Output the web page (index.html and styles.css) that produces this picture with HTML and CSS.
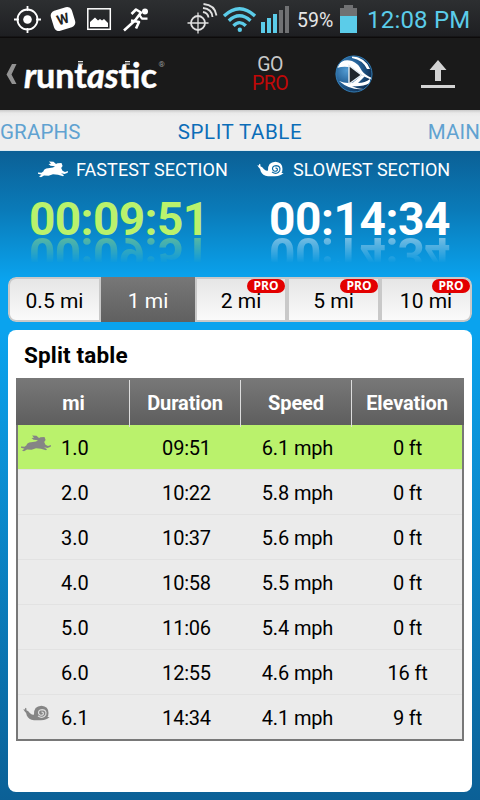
FILE: index.html
```html
<!DOCTYPE html>
<html lang="en">
<head>
<meta charset="utf-8">
<title>Split table</title>
<link rel="stylesheet" href="styles.css">
</head>
<body>
<svg class="defs" width="0" height="0">
  <defs>
    <symbol id="rabbit" viewBox="0 0 30 17">
      <path d="M0 11.500 L3.500 11.800 L5.500 10.200 Q6 7.500 10 7.200 L15 6.500 L17 5.300 L12.500 4.800 L10.500 3 L13 2.800 L11 .6 L15.500 .8 L18 3 L19.500 2.200 L23.500 2 L24.600 5 L23.200 7 L24.500 9.800 L27 11 L30 10 L29.700 11.800 L26.500 13 L23 12.200 L26 14.300 L25 15.300 L20 13.800 L15 13.200 L10.500 14.800 L6 14.600 L3 16.200 L1 15.500 L3.500 13.700 L0 12.800 Z"/>
    </symbol>
    <symbol id="snail" viewBox="0 0 27 16">
      <path d="M.3 4.200 L2 4.500 L2.200 2.800 L3.500 3.500 L3.400 5.300 Q5.500 6 6.800 8 Q9 10.500 11 9.500 Q10.500 1 18.500 .7 Q25.500 1.200 25.500 8 Q25.500 11 24.300 12.100 L26.600 12 Q24 15 18 15.300 L11 15.300 Q5.500 14.500 3.800 10.500 Q3.500 7.500 1.600 6.200 Z"/>
      <path class="shell" d="M15 11 Q20 14.200 22.700 9.700 Q24 5.200 19.200 4.600 Q14.600 5 15.700 8.700 Q17.500 11.400 20.200 9.400 Q21 6.900 18.500 7.100"/>
    </symbol>
  </defs>
</svg>

<header class="status">
  <svg class="tray" width="350" height="37" viewBox="0 0 350 37">
    <g fill="none" stroke="#fff" stroke-width="1.8">
      <circle cx="27.500" cy="19.500" r="10"/>
      <path d="M27.500 6V11M27.500 28V33M14 19.500H19M36 19.500H41"/>
    </g>
    <circle cx="27.500" cy="19.500" r="4.300" fill="#fff"/>
    <g transform="rotate(-17 63 19)">
      <rect x="52" y="8.500" width="22" height="21" rx="5" fill="#fff"/>
      <text class="w-mark" x="63" y="24">W</text>
    </g>
    <rect x="87.800" y="8.800" width="22.500" height="20.500" fill="none" stroke="#fff" stroke-width="1.500"/>
    <path d="M90 27V22L95 17.500L98 20.500L100 19L102 20.500L104 19L108 23V27Z" fill="#fff"/>
    <circle cx="145" cy="11.500" r="3" fill="#fff"/>
    <g fill="none" stroke="#fff" stroke-width="2.600" stroke-linejoin="round">
      <path d="M131.500 14L136 9.500L141 12.500L135 20.500L124 30.500"/>
      <path d="M139 14.500L142 18.700H147.500" stroke-width="2.200"/>
      <path d="M131 20.500L139 22L136 28.500"/>
    </g>
    <g fill="none" stroke="#e0e0e0" stroke-width="1.800">
      <circle cx="198" cy="23" r="7"/>
      <path d="M198 12.500V33.500M187.500 23H208.500" stroke-width="1.300"/>
      <path d="M203 12Q208 13 208.500 17.500M203 8Q212 9 212.500 17M203.500 4Q215 5 216.500 15.500"/>
    </g>
    <g fill="none" stroke="#5bcce9" stroke-width="3.400">
      <path d="M224 16Q239.500 1.500 255 16"/>
      <path d="M228.800 20.800Q239.500 10.800 250.500 20.800"/>
      <path d="M233.500 25.800Q239.500 19.500 245.800 25.800"/>
    </g>
    <circle cx="239.800" cy="29.700" r="2.200" fill="#5bcce9"/>
    <path d="M261 22h4v11h-4zM267 18h4v15h-4zM273 14h4v19h-4z" fill="#5bcce9"/>
    <path d="M279 10h4v23h-4zM285 6h4v27h-4z" fill="#707173"/>
  </svg>
  <span class="percent">59%</span>
  <svg class="battery" width="18" height="37" viewBox="0 0 18 37">
    <path d="M0 8H4V5H13V8H17V16H0Z" fill="#707173"/>
    <path d="M0 16H17V33H0Z" fill="#5bcce9"/>
  </svg>
  <span class="clock">12:08 PM</span>
</header>

<div class="actionbar">
  <svg class="brand" width="170" height="72" viewBox="0 0 170 72">
    <path d="M12 26H16.500L11.500 36.500L16.500 46H12L6.500 36.500Z" fill="#929292"/>
    <g class="logo">
      <text x="24" y="49.500" textLength="133" lengthAdjust="spacingAndGlyphs"><tspan class="slant">r</tspan>unt<tspan class="slant">as</tspan>tic</text>
    </g>
    <path d="M78 23.700h5M78 26.200h5M125 23.700h5M125 26.200h5" stroke="#ddd" stroke-width="1.200"/>
    <text class="reg" x="158.500" y="28.500">®</text>
  </svg>
  <div class="gopro"><span>GO</span><span class="red">PRO</span></div>
  <svg class="globe" width="38" height="38" viewBox="0 0 38 38">
    <defs>
      <radialGradient id="ball" cx=".3" cy=".4" r=".75">
        <stop offset="0" stop-color="#529bd2"/><stop offset=".5" stop-color="#246096"/><stop offset="1" stop-color="#0b2545"/>
      </radialGradient>
      <clipPath id="ballclip"><circle cx="19" cy="19" r="18.300"/></clipPath>
    </defs>
    <circle cx="19" cy="19" r="18.300" fill="url(#ball)"/>
    <g clip-path="url(#ballclip)">
      <path d="M2 11Q8 3 17 6Q23 8 27 16Q30 20 37 23V25Q29 22 23 17Q14 9 2 13Z" fill="#fff"/>
      <path d="M17 1Q31 3 35 14L32 14Q28 5 17 3Z" fill="#fff"/>
      <path d="M4 26Q11 29 18 27.500L27 20L30 21L23 28Q30 28 35 24V28Q27 32 17 31Q22 34 29 34Q16 36 4 26Z" fill="#fff"/>
      <path d="M14 10.500L26.500 20L14 29Z" fill="#20262c" stroke="#e6eef4" stroke-width="1.400"/>
    </g>
    <circle cx="19" cy="19" r="18" fill="none" stroke="#347cb2" stroke-width="1"/>
  </svg>
  <svg class="share" width="34" height="30" viewBox="0 0 34 30">
    <path d="M17 1L25.500 11H20V22H14V11H8.500ZM0 26H34V29H0Z" fill="#d3d3d3"/>
  </svg>
</div>

<nav class="tabs">
  <span>GRAPHS</span>
  <span class="current">SPLIT TABLE</span>
  <span class="last">MAIN</span>
</nav>

<main>
  <section class="summary">
    <div class="stat fast">
      <div class="label"><svg width="30" height="17"><use href="#rabbit"/></svg><span>FASTEST SECTION</span></div>
      <div class="time">00:09:51</div>
      <div class="mirror" aria-hidden="true"><div>00:09:51</div></div>
    </div>
    <div class="stat slow">
      <div class="label"><svg width="27" height="16"><use href="#snail"/></svg><span>SLOWEST SECTION</span></div>
      <div class="time">00:14:34</div>
      <div class="mirror" aria-hidden="true"><div>00:14:34</div></div>
    </div>
  </section>

  <div class="segments">
    <button>0.5 mi</button>
    <button class="on">1 mi</button>
    <button>2 mi<i>PRO</i></button>
    <button>5 mi<i>PRO</i></button>
    <button>10 mi<i>PRO</i></button>
  </div>

  <section class="card">
    <h2>Split table</h2>
    <div class="table">
      <div class="row head"><b>mi</b><b>Duration</b><b>Speed</b><b>Elevation</b></div>
      <div class="row best"><span><svg class="mark" width="30" height="17"><use href="#rabbit"/></svg>1.0</span><span>09:51</span><span>6.1 mph</span><span>0 ft</span></div>
      <div class="row"><span>2.0</span><span>10:22</span><span>5.8 mph</span><span>0 ft</span></div>
      <div class="row"><span>3.0</span><span>10:37</span><span>5.6 mph</span><span>0 ft</span></div>
      <div class="row"><span>4.0</span><span>10:58</span><span>5.5 mph</span><span>0 ft</span></div>
      <div class="row"><span>5.0</span><span>11:06</span><span>5.4 mph</span><span>0 ft</span></div>
      <div class="row"><span>6.0</span><span>12:55</span><span>4.6 mph</span><span>16 ft</span></div>
      <div class="row worst"><span><svg class="mark" width="27" height="16"><use href="#snail"/></svg>6.1</span><span>14:34</span><span>4.1 mph</span><span>9 ft</span></div>
    </div>
  </section>
</main>
</body>
</html>
```
FILE: styles.css
```css
* { box-sizing: border-box; }
body { margin: 0; width: 480px; height: 800px; overflow: hidden; font-family: Roboto, sans-serif; color: #000; background: #1a1a1a; }
svg { display: block; flex: none; }
.defs { position: absolute; }
span, b, button { white-space: nowrap; }

.status { display: flex; height: 38px; background: linear-gradient(#2d2f31, #1e1f22 36px, #0d0b0b 37px); }
.tray { margin-right: -53px; }
.w-mark { font: bold 14px Roboto, sans-serif; fill: #222; text-anchor: middle; }
.percent { width: 43px; font-size: 19.500px; line-height: 41px; color: #e6e6e6; }
.clock { margin-left: 9px; font-size: 24px; line-height: 40px; color: #5bcce9; letter-spacing: .2px; }

.actionbar { display: flex; align-items: center; height: 72px; background: #1a1a1a; }
.logo text { font: 700 34px Lato, sans-serif; fill: #fff; stroke: #fff; stroke-width: .5px; }
.logo .slant { font-style: italic; }
.reg { font-size: 8px; fill: #999; }
.gopro { display: flex; flex-direction: column; width: 60px; margin-left: 70px; text-align: center; font-size: 19.500px; line-height: 19px; letter-spacing: -.6px; color: #c8c8c8; }
.gopro .red { color: #c20808; }
.globe { margin-left: 35px; }
.share { margin-left: 48px; }

.tabs { display: grid; grid-template-columns: 120px 240px 120px; height: 41px; background: linear-gradient(#c9c9c9, #e9e9e9 3px, #eee 7px); border-bottom: 1px solid #dceaf0; font-size: 20.500px; line-height: 44px; letter-spacing: .15px; color: #60a2d1; }
.tabs .current { text-align: center; color: #0b6db8; letter-spacing: .55px; }
.tabs .last { text-align: right; }

main { height: 649px; padding: 0 8px; background: linear-gradient(#0b6096, #0a7bb9 60px, #0aa3ee 128px, #0aa3ee 180px, #0b6096 100%); }
.summary { display: grid; grid-template-columns: 240px 240px; height: 126px; margin: 0 -8px; }
.label { display: flex; align-items: center; height: 38px; padding-bottom: 2px; color: #fff; fill: #fff; font-size: 18px; --shell: #0b6ba5; }
.fast .label { padding-left: 38px; gap: 8px; letter-spacing: .08px; }
.slow .label { padding-left: 17px; gap: 9px; }
.shell { fill: none; stroke: var(--shell); stroke-width: 1.200px; }
.time { height: 48px; padding-left: 29px; font-size: 46px; font-weight: 700; line-height: 60px; letter-spacing: -.4px; color: #fff; }
.mirror { height: 26px; overflow: hidden; -webkit-mask-image: linear-gradient(rgba(0,0,0,.45), transparent); mask-image: linear-gradient(rgba(0,0,0,.45), transparent); }
.mirror div { height: 60px; padding-left: 29px; font-size: 46px; font-weight: 700; line-height: 60px; letter-spacing: -.4px; color: #fff; transform: scaleY(-1); margin-top: -13px; }
.fast .time, .fast .mirror div { color: #baf26c; letter-spacing: -.6px; }

.segments { display: grid; grid-template-columns: 93px 94px 92px 93px 92px; height: 45px; border-radius: 8px; overflow: hidden; }
.segments button { position: relative; padding: 3px 0 0; border: 2px solid #c9c9c9; background: linear-gradient(#e6e6e6, #fafafa); font: 21px Roboto, sans-serif; color: #000; }
.segments button:first-child { border-radius: 8px 0 0 8px; }
.segments button:last-child { border-radius: 0 8px 8px 0; }
.segments .on { border: 0; background: linear-gradient(#777, #606060); color: #fff; }
.segments i { position: absolute; top: 0; right: 0; width: 38px; height: 14px; border-radius: 7px; background: #e30000; color: #fff; font: bold 12px/14px "Open Sans", sans-serif; }

.card { height: 462px; margin-top: 8px; padding: 0 8px; border-radius: 8px; background: #fff; }
h2 { height: 48px; margin: 0; padding-left: 8px; font-size: 22.500px; line-height: 51px; letter-spacing: .15px; }
.table { border: 2px solid #787878; border-top: 0; }
.row { display: grid; grid-template-columns: repeat(4, 111px); height: 45px; background: #ebebeb; border-bottom: 1px solid #e2e2e2; font-size: 20px; line-height: 46px; text-align: center; }
.row span { position: relative; }
.row span:first-child { padding-left: 3px; }
.row span:nth-child(2) { padding-left: 4px; letter-spacing: -.2px; }
.row span:nth-child(3) { padding-left: 4px; letter-spacing: -.15px; }
.row span:nth-child(4) { padding-left: 2px; letter-spacing: -.15px; }
.head { height: 47px; margin: 0 -2px; padding: 2px 2px 0; border: 0; background: linear-gradient(#787878, #5e5e5e); color: #fff; line-height: 47px; letter-spacing: -.1px; }
.head b + b { border-left: 1px solid #ddd; }
.best { background: #baf26c; }
.worst { height: 44px; border: 0; }
.mark { position: absolute; left: 3px; top: 10px; fill: #858585; --shell: #ddd; }
.worst .mark { left: 5px; }
```
